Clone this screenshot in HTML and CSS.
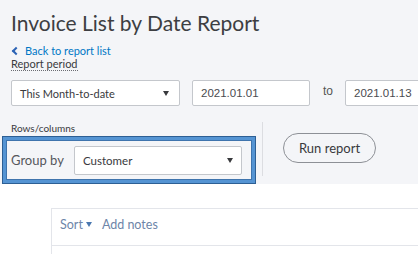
FILE: index.html
```html
<!DOCTYPE html>
<html lang="en">
<head>
    <meta charset="UTF-8">
    <title>Invoice List by Date Report</title>
    <link rel="stylesheet" href="styles.css">
</head>
<body>
    <div class="header">
        <h1 class="title">Invoice List by Date Report</h1>
        <a class="back" href="#"><span class="chev"></span>Back to report list</a>
        <div class="label dotted">Report period</div>
        <div class="period-row">
            <div class="select period"><span>This Month-to-date</span><span class="caret"></span></div>
            <div class="input date1">2021.01.01</div>
            <span class="to">to</span>
            <div class="input date2">2021.01.13</div>
        </div>
        <div class="options-row">
            <div class="rows-col">
                <div class="label small">Rows/columns</div>
                <div class="highlight">
                    <span class="group-label">Group by</span>
                    <div class="select group"><span>Customer</span><span class="caret"></span></div>
                </div>
            </div>
            <div class="divider"></div>
            <button class="run">Run report</button>
        </div>
    </div>
    <div class="content">
        <div class="card">
            <div class="toolbar">
                <span class="sort">Sort<span class="caret blue"></span></span>
                <span class="notes">Add notes</span>
            </div>
        </div>
    </div>
</body>
</html>
```

FILE: styles.css
```css
body {
    margin: 0;
    font-family: Lato, "Noto Sans", sans-serif;
    background-color: #ffffff;
    color: #393a3d;
}
.header {
    background-color: #f4f5f8;
    padding: 10px 0 0 11px;
    height: 174px;
    overflow: hidden;
}
.title {
    margin: 0;
    font-size: 21px;
    font-weight: 400;
    line-height: 26px;
    color: #3d3e42;
}
.back {
    display: flex;
    align-items: center;
    margin-top: 8px;
    font-size: 11px;
    line-height: 13px;
    color: #0077c5;
    text-decoration: none;
}
.chev {
    width: 4px;
    height: 4px;
    border-left: 2px solid #2c63b5;
    border-bottom: 2px solid #2c63b5;
    transform: rotate(45deg);
    margin: 0 6px 0 2px;
}
.label {
    font-size: 11px;
    line-height: 13px;
    color: #393a3d;
}
.dotted {
    width: fit-content;
    border-bottom: 1px dotted #6b6c72;
}
.period-row {
    display: flex;
    align-items: center;
    margin-top: 9px;
}
.select, .input {
    box-sizing: border-box;
    flex-shrink: 0;
    height: 26px;
    background: #fff;
    border: 1px solid #c4c7cc;
    border-radius: 2px;
    font-size: 11px;
    color: #393a3d;
    display: flex;
    align-items: center;
    padding: 0 8px;
}
.select {
    justify-content: space-between;
}
.period {
    width: 169px;
    padding-right: 10px;
}
.caret {
    width: 0;
    height: 0;
    border-left: 3.5px solid transparent;
    border-right: 3.5px solid transparent;
    border-top: 5px solid #393a3d;
}
.input {
    font-family: "Liberation Sans", Arial, sans-serif;
    font-size: 11.5px;
    color: #4a4b50;
}
.date1 {
    width: 118px;
    margin-left: 12px;
}
.to {
    flex-shrink: 0;
    font-family: "Liberation Sans", Arial, sans-serif;
    font-size: 12px;
    color: #555;
    margin: 0 12px 0 13px;
    position: relative;
    top: -2px;
}
.date2 {
    width: 90px;
}
.options-row {
    display: flex;
    margin-top: 16px;
}
.rows-col {
    margin-left: -9px;
}
.small {
    font-size: 10px;
    margin-left: 9px;
}
.highlight {
    box-sizing: border-box;
    width: 254px;
    height: 48px;
    margin-top: 1px;
    border: 4px solid #5594d3;
    outline: 1px solid #2d5f94;
    outline-offset: -1px;
    box-shadow: inset 0 0 0 1px #3f74ad;
    background: #f4f5f8;
    display: flex;
    align-items: center;
    padding-left: 5px;
}
.group-label {
    font-size: 13px;
    color: #55575c;
    width: 63px;
}
.group {
    width: 168px;
    height: 29px;
    padding-left: 8px;
    padding-right: 8px;
    font-size: 11.5px;
}
.divider {
    width: 1px;
    height: 54px;
    background: #dcdde1;
    margin-left: 6px;
    margin-top: 0;
}
.run {
    box-sizing: border-box;
    width: 93px;
    height: 30px;
    margin: 11px 0 0 20px;
    border: 1px solid #8d9096;
    border-radius: 15px;
    background: transparent;
    font-family: Lato, "Noto Sans", sans-serif;
    font-size: 13px;
    font-weight: 400;
    color: #393a3d;
}
.content {
    padding: 24px 0 0 51px;
}
.card {
    border-left: 1px solid #e3e5ea;
    border-top: 1px solid #e3e5ea;
    height: 50px;
}
.toolbar {
    display: flex;
    align-items: center;
    box-sizing: border-box;
    height: 37px;
    padding: 0 0 5px 8px;
    border-bottom: 1px solid #e3e5ea;
    font-size: 12.5px;
    color: #6d85a8;
}
.sort {
    display: flex;
    align-items: center;
}
.caret.blue {
    border-top-color: #4a78b0;
    margin-left: 3px;
}
.notes {
    margin-left: 10px;
}
```
